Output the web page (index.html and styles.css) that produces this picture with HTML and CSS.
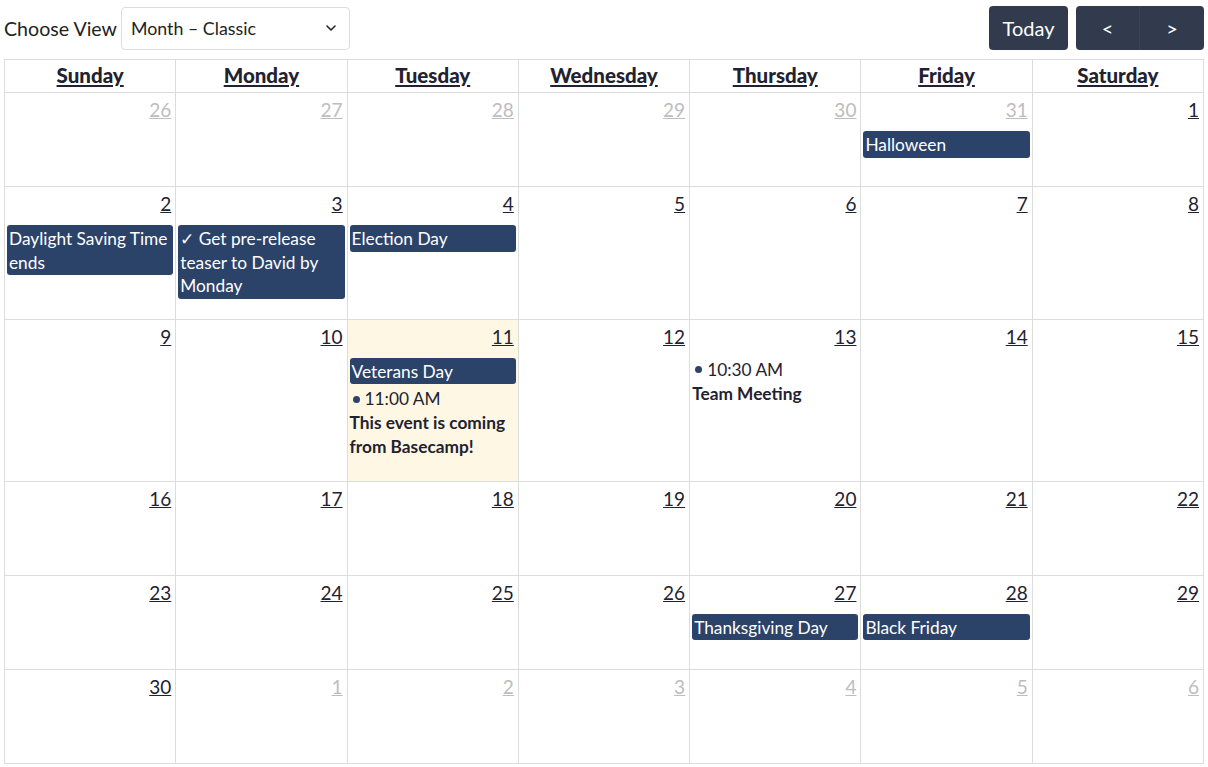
FILE: index.html
```html
<!DOCTYPE html>
<html>
<head>
<meta charset="utf-8">
<link rel="stylesheet" href="styles.css">
</head>
<body>
<div class="page">
  <div class="toolbar">
    <div class="view-choice">
      <label class="view-label">Choose View</label>
      <div class="select">
        <span>Month – Classic</span>
        <svg class="chev" width="12" height="8" viewBox="0 0 12 8"><path d="M2 2 L6 6 L10 2" fill="none" stroke="#222" stroke-width="1.6" stroke-linecap="round" stroke-linejoin="round"/></svg>
      </div>
    </div>
    <div class="nav">
      <button class="btn today">Today</button>
      <div class="btn-group">
        <button class="btn arrow">&lt;</button>
        <button class="btn arrow">&gt;</button>
      </div>
    </div>
  </div>
  <table class="cal">
    <thead>
      <tr>
        <th><a>Sunday</a></th><th><a>Monday</a></th><th><a>Tuesday</a></th><th><a>Wednesday</a></th><th><a>Thursday</a></th><th><a>Friday</a></th><th><a>Saturday</a></th>
      </tr>
    </thead>
    <tbody>
      <tr>
        <td><div class="num other">26</div></td>
        <td><div class="num other">27</div></td>
        <td><div class="num other">28</div></td>
        <td><div class="num other">29</div></td>
        <td><div class="num other">30</div></td>
        <td><div class="num other">31</div><div class="ev">Halloween</div></td>
        <td><div class="num">1</div></td>
      </tr>
      <tr>
        <td><div class="num">2</div><div class="ev">Daylight Saving Time ends</div></td>
        <td><div class="num">3</div><div class="ev">&#10003; Get pre-release teaser to David by Monday</div></td>
        <td><div class="num">4</div><div class="ev">Election Day</div></td>
        <td><div class="num">5</div></td>
        <td><div class="num">6</div></td>
        <td><div class="num">7</div></td>
        <td><div class="num">8</div></td>
      </tr>
      <tr>
        <td><div class="num">9</div></td>
        <td><div class="num">10</div></td>
        <td class="today-cell"><div class="num">11</div><div class="ev">Veterans Day</div>
          <div class="timed"><div class="time"><span class="dot"></span>11:00 AM</div><div class="title">This event is coming from Basecamp!</div></div></td>
        <td><div class="num">12</div></td>
        <td><div class="num">13</div>
          <div class="timed"><div class="time"><span class="dot"></span>10:30 AM</div><div class="title">Team Meeting</div></div></td>
        <td><div class="num">14</div></td>
        <td><div class="num">15</div></td>
      </tr>
      <tr>
        <td><div class="num">16</div></td>
        <td><div class="num">17</div></td>
        <td><div class="num">18</div></td>
        <td><div class="num">19</div></td>
        <td><div class="num">20</div></td>
        <td><div class="num">21</div></td>
        <td><div class="num">22</div></td>
      </tr>
      <tr>
        <td><div class="num">23</div></td>
        <td><div class="num">24</div></td>
        <td><div class="num">25</div></td>
        <td><div class="num">26</div></td>
        <td><div class="num">27</div><div class="ev">Thanksgiving Day</div></td>
        <td><div class="num">28</div><div class="ev">Black Friday</div></td>
        <td><div class="num">29</div></td>
      </tr>
      <tr>
        <td><div class="num">30</div></td>
        <td><div class="num other">1</div></td>
        <td><div class="num other">2</div></td>
        <td><div class="num other">3</div></td>
        <td><div class="num other">4</div></td>
        <td><div class="num other">5</div></td>
        <td><div class="num other">6</div></td>
      </tr>
    </tbody>
  </table>
</div>
</body>
</html>
```
FILE: styles.css
```css
* { box-sizing: border-box; }
html, body { margin: 0; padding: 0; background: #fff; }
body {
  font-family: Lato, "Liberation Sans", sans-serif;
  color: #1f2230;
  font-size: 16px;
}
.page { padding: 6px 4px 0 4px; width: 1208px; }
.toolbar {
  display: flex;
  justify-content: space-between;
  align-items: center;
  height: 44px;
  margin-bottom: 9px;
}
.view-choice { display: flex; align-items: center; gap: 4px; }
.view-label { font-size: 19.6px; color: #222; }
.select {
  width: 229px;
  height: 43px;
  border: 1px solid #dcdcdc;
  border-radius: 4px;
  display: flex;
  align-items: center;
  justify-content: space-between;
  padding: 0 12px 0 9px;
  font-size: 17.8px;
  color: #222;
}
.nav { display: flex; gap: 8px; }
.btn {
  font-family: inherit;
  background: #323b4d;
  color: #fff;
  border: none;
  border-radius: 4px;
  height: 44px;
  font-size: 20px;
  cursor: pointer;
}
.today { width: 79px; }
.btn-group { display: flex; }
.btn-group .arrow { width: 64px; border-radius: 0; }
.btn-group .arrow:first-child { border-radius: 4px 0 0 4px; border-right: 1px solid #3a4457; }
.btn-group .arrow:last-child { border-radius: 0 4px 4px 0; }

.cal {
  width: 1200px;
  border-collapse: collapse;
  table-layout: fixed;
}
.cal th, .cal td { border: 1px solid #dcdcdc; }
.cal th {
  height: 33px;
  font-size: 20.5px;
  font-weight: 900;
  text-align: center;
  padding: 0 0 3px 0;
}
.cal th a { text-decoration: underline; color: #1f2230; }
.cal td {
  vertical-align: top;
  height: 94px;
  padding: 5px 2px 17px 2px;
}
.today-cell { background: #fdf7e3; }
.num {
  text-align: right;
  font-size: 19px;
  line-height: 24px;
  text-decoration: underline;
  color: #1f2230;
  padding-right: 2px;
  margin-bottom: 9px;
}
.num.other { color: #bdbdbd; }
.ev {
  background: #2c4369;
  color: #fff;
  border-radius: 3px;
  font-size: 17.3px;
  line-height: 23.5px;
  padding: 2px 2px 1px 2px;
  margin-bottom: 3px;
}
.timed { padding: 0; font-size: 17.3px; line-height: 24px; margin-bottom: 4.5px; }
.time { display: flex; align-items: center; }
.dot {
  width: 7px; height: 7px; border-radius: 50%;
  background: #2c4369;
  margin: 0 5px 0 3px;
}
.title { font-weight: 700; }
```
